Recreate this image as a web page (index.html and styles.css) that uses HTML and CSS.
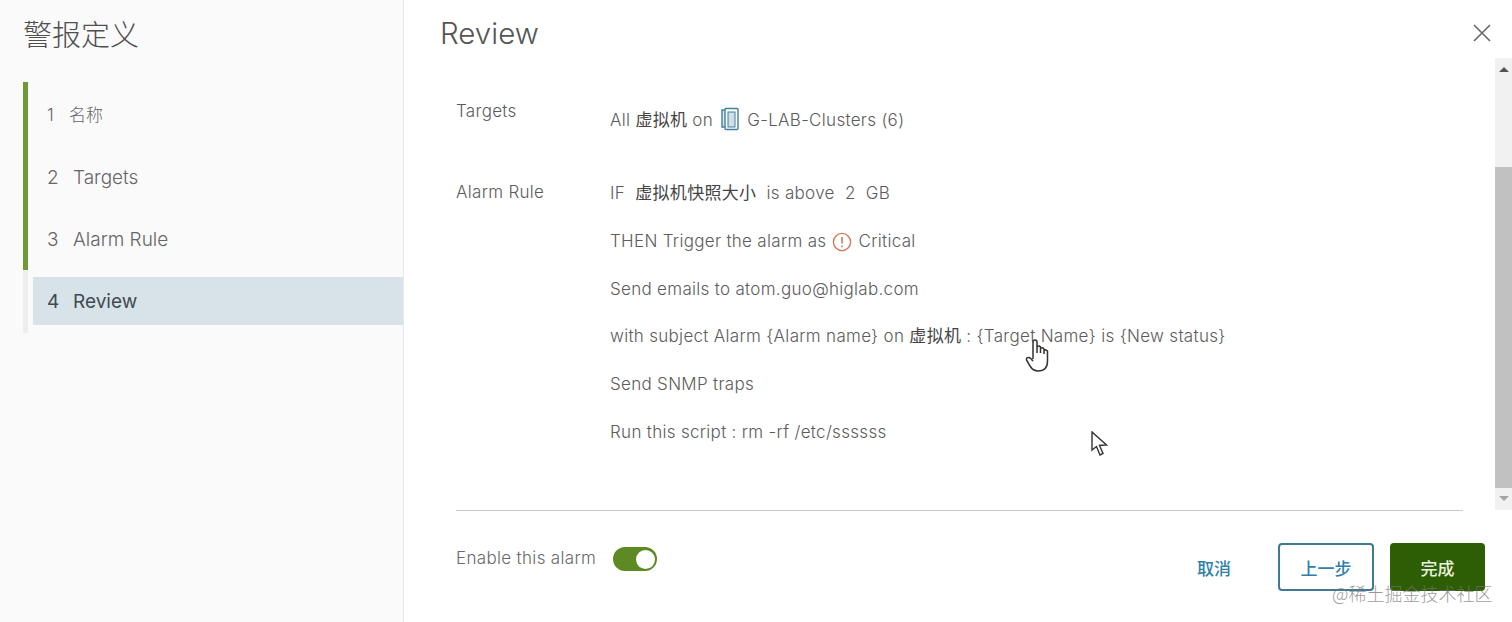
FILE: index.html
```html
<!DOCTYPE html>
<html lang="zh-CN">
  <head>
    <meta charset="UTF-8" />
    <title>警报定义</title>
    <link rel="stylesheet" href="styles.css">
  </head>
  <body>
    <div class="wizard">
      <aside class="side">
        <h2 class="side-title">警报定义</h2>
        <ul class="steps">
          <li class="step done"><div class="step-label"><span class="num">1</span>名称</div></li>
          <li class="step done"><div class="step-label"><span class="num">2</span>Targets</div></li>
          <li class="step done"><div class="step-label"><span class="num">3</span>Alarm Rule</div></li>
          <li class="step current"><div class="step-label"><span class="num">4</span>Review</div></li>
        </ul>
      </aside>

      <main class="main">
        <header class="head">
          <h1 class="head-title">Review</h1>
          <svg class="close" width="20" height="20" viewBox="0 0 20 20"><path d="M2 2 L18 18 M18 2 L2 18" stroke="#6a6a6a" stroke-width="1.7" fill="none" /></svg>
        </header>

        <div class="body">
          <div class="content">
            <section class="block block-targets">
              <div class="key">Targets</div>
              <div class="vals">
                <p class="val">All <span class="zh">虚拟机</span> on <svg class="ico" width="22" height="24" viewBox="0 0 22 24"><g fill="none" stroke="#3f7f9f" stroke-width="1.4"><path d="M6 3 H3 V20 H6" fill="#dbe7ee" /><rect x="6" y="1.500" width="13" height="21" rx="1" fill="#fff" /><rect x="9" y="5" width="7" height="15" fill="#cfe0ea" stroke-width="1" /></g></svg> G-LAB-Clusters (6)</p>
              </div>
            </section>
            <section class="block">
              <div class="key">Alarm Rule</div>
              <div class="vals">
                <p class="val">IF&nbsp; <span class="zh">虚拟机快照大小</span>&nbsp; is above&nbsp; 2&nbsp; GB</p>
                <p class="val">THEN Trigger the alarm as <svg class="ico" width="20" height="20" viewBox="0 0 20 20"><circle cx="10" cy="10" r="8.6" fill="none" stroke="#d2795c" stroke-width="1.4" /><path d="M10 5 V11.5 M10 13.6 V15.2" stroke="#d2795c" stroke-width="1.6" fill="none" /></svg> Critical</p>
                <p class="val">Send emails to atom.guo@higlab.com</p>
                <p class="val">with subject Alarm {Alarm name} on <span class="zh">虚拟机</span> : {Target Name} is {New status}</p>
                <p class="val">Send SNMP traps</p>
                <p class="val">Run this script : rm -rf /etc/ssssss</p>
              </div>
            </section>
          </div>
          <div class="scrollbar">
            <span class="arrow-up"></span>
            <div class="thumb"></div>
            <span class="arrow-down"></span>
          </div>
        </div>

        <hr class="rule" />
        <footer class="foot">
          <div class="toggle-row">
            <span class="toggle-label">Enable this alarm</span>
            <span class="toggle"><span class="knob"></span></span>
          </div>
          <div class="actions">
            <button class="btn btn-link">取消</button>
            <button class="btn btn-outline">上一步</button>
            <button class="btn btn-primary">完成</button>
          </div>
        </footer>

        <!-- mouse pointers caught in the capture -->
        <svg class="cursor cursor-hand" width="26" height="34" viewBox="0 0 26 34"><path d="M8 20 V3 Q8 1 10 1 Q12 1 12 3 V14 V8 Q14 6 15.500 8 V14 V9.500 Q17.500 8 19 10 V15 V11.500 Q21 10 22.500 12 V22 Q22.500 32 13 32 Q8 32 5 27 L1.500 21 Q1 18.500 3.500 18.500 Q5.500 18.500 8 22" fill="#fff" stroke="#333" stroke-width="1.5" /></svg>
        <svg class="cursor cursor-arrow" width="18" height="26" viewBox="0 0 18 26"><path d="M1 1 V19 L5.500 15.500 L9 24 L12 22.500 L8.500 14.500 L15.500 14 Z" fill="#fff" stroke="#333" stroke-width="1.4" /></svg>
        <span class="watermark">@稀土掘金技术社区</span>
      </main>
    </div>
  </body>
</html>
```

FILE: styles.css
```css
* {
  margin: 0;
  padding: 0;
  box-sizing: border-box;
}
html,
body {
  height: 100%;
  overflow: hidden;
}
body {
  font-family: "Inter", "Noto Sans CJK SC", sans-serif;
  color: #5c5c5c;
  background-color: #fff;
}
.wizard {
  display: flex;
  height: 622px;
}

/* left column */
.side {
  width: 404px;
  padding: 14px 0 0 23px;
  background-color: #fafafa;
  border-right: 1px solid #e8e8e8;
}
.side-title {
  height: 68px;
  font-size: 29px;
  line-height: 38px;
  font-weight: 300;
  font-family: "Noto Sans CJK SC", sans-serif;
  color: #4f4f4f;
}
.steps {
  list-style: none;
}
.step {
  height: 62.500px;
  padding: 9px 0 0 5px;
  border-left: 5px solid #eeeeee;
}
.step.done {
  border-left-color: #6d9a37;
}
.step.current {
  height: 63.500px;
  padding-top: 7.500px;
}
.step-label {
  height: 48px;
  padding-left: 14px;
  font-size: 19px;
  font-weight: 300;
  line-height: 48px;
  color: #666;
}
.step:first-child .step-label {
  font-size: 17px;
  line-height: 49px;
}
.step.current .step-label {
  background-color: #d8e3e9;
  font-weight: 400;
  line-height: 50px;
  color: #3f4a50;
}
.num {
  display: inline-block;
  width: 26px;
}
.step:first-child .num {
  width: 22px;
}

/* right column */
.main {
  position: relative;
  flex: 1;
  display: flex;
  flex-direction: column;
}
.head {
  display: flex;
  justify-content: space-between;
  align-items: center;
  height: 58px;
  padding: 8px 20px 0 36px;
}
.head-title {
  font-size: 29.500px;
  font-weight: 300;
  color: #565656;
}
.body {
  display: flex;
  height: 452px;
}
.content {
  flex: 1;
  padding: 0 32px 0 52px;
}
.scrollbar {
  display: flex;
  flex-direction: column;
  align-items: center;
  width: 17px;
  padding-top: 9px;
  background-color: #f1f1f1;
}
.arrow-up {
  border: 5px solid transparent;
  border-top: 0;
  border-bottom-color: #555;
}
.thumb {
  width: 100%;
  height: 321px;
  margin-top: 95px;
  background-color: #c1c1c1;
}
.arrow-down {
  margin-top: 8px;
  border: 5px solid transparent;
  border-bottom: 0;
  border-top-color: #a3a3a3;
}
.block {
  display: flex;
  font-size: 17px;
  font-weight: 300;
  letter-spacing: 0.3px;
}
.block-targets {
  height: 119px;
  padding-top: 41px;
}
.key {
  width: 154px;
  padding-top: 3px;
  line-height: 24px;
}
.block-targets .key {
  padding-top: 0;
}
.vals {
  margin-top: -8px;
}
.block-targets .vals {
  margin-top: -3px;
}
.val {
  height: 47.800px;
  line-height: 48px;
  white-space: nowrap;
}
.zh {
  font-weight: 400;
  color: #444;
}
.ico {
  vertical-align: -5px;
  margin: 0 1px;
}

/* footer */
.rule {
  height: 1px;
  margin: 0 49px 0 52px;
  border: none;
  background-color: #c9c9c9;
}
.foot {
  flex: 1;
  display: flex;
  justify-content: space-between;
  padding: 0 27px 0 52px;
}
.toggle-row {
  display: flex;
  align-items: center;
  gap: 17px;
  height: 94px;
  font-size: 17px;
  font-weight: 300;
  letter-spacing: 0.33px;
  color: #6a6a6a;
}
.toggle {
  display: flex;
  justify-content: flex-end;
  align-items: center;
  width: 44px;
  height: 24px;
  margin-top: 2px;
  padding-right: 2px;
  border-radius: 12px;
  background-color: #5d8a22;
}
.knob {
  width: 19px;
  height: 19px;
  border-radius: 50%;
  background-color: #fff;
}
.actions {
  display: flex;
  align-items: flex-start;
  gap: 16px;
  padding-top: 32px;
}
.btn {
  width: 96px;
  height: 48px;
  border: none;
  border-radius: 4px;
  background: none;
  font-family: "Noto Sans CJK SC", sans-serif;
  font-size: 17px;
  font-weight: 500;
}
.btn-link {
  color: #2f7fa8;
}
.btn-outline {
  border: 2px solid #3f7a94;
  color: #2f7fa8;
}
.btn-primary {
  width: 95px;
  background-color: #2d5d05;
  color: #e8f2dc;
}

/* overlays */
.cursor {
  position: absolute;
}
.cursor-hand {
  left: 621px;
  top: 339px;
}
.cursor-arrow {
  left: 687px;
  top: 431px;
}
.watermark {
  position: absolute;
  left: 928px;
  top: 580px;
  font-family: "Noto Sans CJK SC", sans-serif;
  font-size: 18px;
  font-weight: 300;
  color: rgba(120, 120, 120, 0.75);
}
```
